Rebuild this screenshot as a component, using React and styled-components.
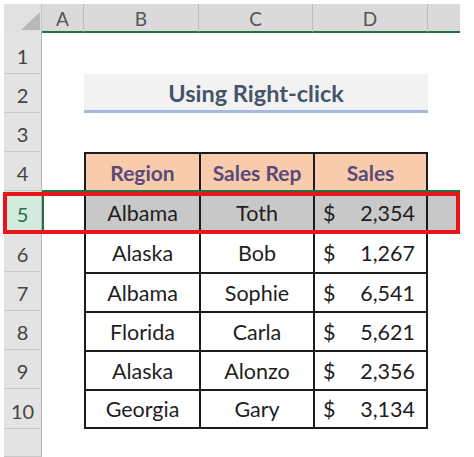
import React from 'react'
import styled, { createGlobalStyle, css } from 'styled-components'

const GlobalStyle = createGlobalStyle`
  body {
    margin: 0;
    background: #fff;
    font-family: Lato, 'Open Sans', sans-serif;
  }
`

const COLS = ['A', 'B', 'C', 'D', '']
const ROW_HEIGHTS = [41, 39, 39, 39, 41, 40, 39, 39, 39, 40]

const rows = [
  { region: 'Albama', rep: 'Toth', sales: '2,354' },
  { region: 'Alaska', rep: 'Bob', sales: '1,267' },
  { region: 'Albama', rep: 'Sophie', sales: '6,541' },
  { region: 'Florida', rep: 'Carla', sales: '5,621' },
  { region: 'Alaska', rep: 'Alonzo', sales: '2,356' },
  { region: 'Georgia', rep: 'Gary', sales: '3,134' },
]

const App = () => {
  return (
    <>
      <GlobalStyle />
      <Page>
        <Sheet>
          <Corner>
            <svg width='38' height='29' viewBox='0 0 38 29'>
              <polygon points='36,8 36,26 17,26' fill='#b8b8b8' />
            </svg>
          </Corner>
          {COLS.map((c, i) => (
            <ColHead key={i} $last={i === COLS.length - 1}>
              {c}
            </ColHead>
          ))}

          {/* row 1 */}
          <RowHead>1</RowHead>
          <Blank $span={5} />

          {/* row 2 - title */}
          <RowHead>2</RowHead>
          <Blank />
          <TitleCell>Using Right-click</TitleCell>
          <Blank />

          {/* row 3 */}
          <RowHead>3</RowHead>
          <Blank $span={5} />

          {/* row 4 - headers */}
          <RowHead>4</RowHead>
          <Blank />
          <HeadCell>Region</HeadCell>
          <HeadCell>Sales Rep</HeadCell>
          <HeadCell $right>Sales</HeadCell>
          <Blank />

          {rows.map((r, i) => {
            const selected = i === 0
            const last = i === rows.length - 1
            return (
              <React.Fragment key={i}>
                <RowHead $active={selected}>{i + 5}</RowHead>
                <Blank />
                <DataCell $selected={selected} $bottom={last}>
                  {r.region}
                </DataCell>
                <DataCell $selected={selected} $bottom={last}>
                  {r.rep}
                </DataCell>
                <MoneyCell $selected={selected} $bottom={last} $right>
                  <span>$</span>
                  <span>{r.sales}</span>
                </MoneyCell>
                <Blank $selected={selected} />
              </React.Fragment>
            )
          })}

          <RowHead />
          <Blank $span={5} />

          <Selection>
            <Handle />
          </Selection>
          <RedBox />
        </Sheet>
      </Page>
    </>
  )
}

const Page = styled.div`
  padding: 4px 0 0 4px;
  height: 453px;
  overflow: hidden;
`

const Sheet = styled.div`
  position: relative;
  display: grid;
  grid-template-columns: 38px 42px 115px 114px 115px 32px;
  grid-template-rows: 29px ${ROW_HEIGHTS.map((h) => h + 'px').join(' ')} 28px;
  width: 456px;
`

const Corner = styled.div`
  background: #e1e1e1;
  border-right: 1px solid #c6c6c6;
  box-sizing: border-box;
  svg {
    display: block;
  }
`

const ColHead = styled.div`
  background: #dadada;
  color: #555;
  font-size: 19px;
  display: flex;
  align-items: center;
  justify-content: center;
  padding-top: 1px;
  box-sizing: border-box;
  border-right: ${(p) => (p.$last ? 'none' : '1px solid #bdbdbd')};
  border-bottom: 2px solid #217346;
`

const RowHead = styled.div`
  background: ${(p) => (p.$active ? '#d3ebdd' : '#e3e3e3')};
  color: ${(p) => (p.$active ? '#217346' : '#444')};
  font-size: 20px;
  display: flex;
  align-items: flex-end;
  justify-content: center;
  padding-bottom: 5px;
  box-sizing: border-box;
  border-bottom: 1px solid #c9c9c9;
  border-right: 1px solid #b8b8b8;
`

const Blank = styled.div`
  grid-column: span ${(p) => p.$span || 1};
  background: ${(p) => (p.$selected ? '#c8c8c8' : '#fff')};
`

const TitleCell = styled.div`
  grid-column: span 3;
  background: #f2f2f2;
  border-bottom: 3px solid #a6b8de;
  color: #44546a;
  font-weight: 700;
  font-size: 23.5px;
  display: flex;
  align-items: center;
  justify-content: center;
  box-sizing: border-box;
  padding-top: 1px;
`

const tableCell = css`
  box-sizing: border-box;
  border-left: 2px solid #1c1c1c;
  border-top: 2px solid #1c1c1c;
  ${(p) => p.$right && 'border-right: 2px solid #1c1c1c;'}
  ${(p) => p.$bottom && 'border-bottom: 2px solid #1c1c1c;'}
  display: flex;
  align-items: center;
  justify-content: center;
`

const HeadCell = styled.div`
  ${tableCell}
  background: #f8cbad;
  color: #5a4a78;
  font-weight: 700;
  font-size: 21px;
`

const DataCell = styled.div`
  ${tableCell}
  background: ${(p) => (p.$selected ? '#c8c8c8' : '#fff')};
  color: #1e1e1e;
  font-size: 21.5px;
`

const MoneyCell = styled(DataCell)`
  justify-content: space-between;
  padding: 0 11px 0 8px;
`

const Selection = styled.div`
  position: absolute;
  left: 38px;
  top: 186px;
  width: 418px;
  height: 42px;
  border-top: 2px solid #217346;
  border-left: 2px solid #217346;
  box-sizing: border-box;
  pointer-events: none;
`

const Handle = styled.div`
  position: absolute;
  left: 0;
  bottom: -2px;
  width: 5px;
  height: 4px;
  background: #217346;
`

const RedBox = styled.div`
  position: absolute;
  left: -1px;
  top: 188px;
  width: 457px;
  height: 42px;
  border: 4px solid #e8151b;
  box-sizing: border-box;
  pointer-events: none;
`

export default App
